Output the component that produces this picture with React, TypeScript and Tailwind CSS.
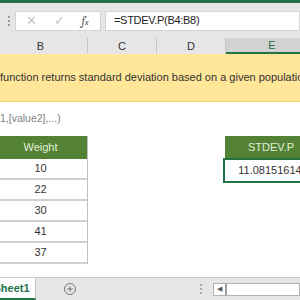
import { Plus } from "lucide-react";

const font = { fontFamily: '"Liberation Sans", Arial, sans-serif' };

const weights = [10, 22, 30, 41, 37];

function FormulaBar() {
  return (
    <div className="flex h-[35px] shrink-0 items-center bg-[#e6e6e6] pl-[2px]">
      <div className="flex w-[13px] shrink-0 flex-col items-center gap-[2px]">
        <span className="h-[2px] w-[2px] bg-[#9a9a9a]" />
        <span className="h-[2px] w-[2px] bg-[#9a9a9a]" />
        <span className="h-[2px] w-[2px] bg-[#9a9a9a]" />
      </div>
      <div className="flex h-[20px] w-[86px] shrink-0 items-center border border-[#d4d4d4] bg-white">
        <span className="w-[30px] text-center text-[13px] leading-none text-[#c3c3c3]">✕</span>
        <span className="w-[26px] text-center text-[13px] leading-none text-[#c3c3c3]">✓</span>
        <span className="w-[26px] text-center font-serif text-[12px] italic leading-none text-[#555]">
          f<span className="text-[8px]">x</span>
        </span>
      </div>
      <div className="ml-[4px] flex h-[20px] flex-1 items-center border border-[#d4d4d4] bg-white pl-[8px] text-[11px] tracking-[-0.3px] text-[#222]">
        =STDEV.P(B4:B8)
      </div>
    </div>
  );
}

function ColumnHeaders() {
  return (
    <div className="-ml-[6px] flex h-[16px] shrink-0 bg-[#e6e6e6] text-[11px] text-[#333]">
      <div className="flex w-[94px] shrink-0 items-center justify-center border-r border-[#c6c6c6]">B</div>
      <div className="flex w-[69px] shrink-0 items-center justify-center border-r border-[#c6c6c6]">C</div>
      <div className="flex w-[69px] shrink-0 items-center justify-center border-r border-[#c6c6c6]">D</div>
      <div className="flex w-[92px] shrink-0 items-center justify-center border-b-2 border-[#217346] bg-[#d2d2d2] text-[#217346]">
        E
      </div>
    </div>
  );
}

export default function App() {
  return (
    <div className="flex h-[300px] w-[300px] flex-col overflow-hidden bg-white" style={font}>
      <div className="h-[3px] shrink-0 bg-[#217346]" />
      <FormulaBar />
      <ColumnHeaders />

      <div className="flex h-[48px] shrink-0 items-center whitespace-nowrap border-b border-[#f2cf6b] bg-[#ffe699] text-[11px] text-[#333]">
        <span>function returns standard deviation based on a given population.</span>
      </div>

      <div className="flex h-[34px] shrink-0 items-center whitespace-nowrap text-[10.5px] text-[#7f7f7f]">
        <span>1,[value2],...)</span>
      </div>

      <div className="-ml-[6px] flex shrink-0 text-[11px]">
        <div className="flex w-[94px] shrink-0 flex-col border-r border-[#bfbfbf]">
          <div className="flex h-[23px] items-center justify-center bg-[#548235] text-[#e2efda]">Weight</div>
          {weights.map((w) => (
            <div
              key={w}
              className="flex h-[21px] items-center justify-center border-b-2 border-[#d0d0d0] text-[#333]"
            >
              {w}
            </div>
          ))}
        </div>
        <div className="w-[137px] shrink-0" />
        <div className="flex w-[92px] shrink-0 flex-col">
          <div className="flex h-[22px] items-center justify-center bg-[#548235] text-[#e2efda]">STDEV.P</div>
          <div className="-ml-[2px] flex h-[25px] items-center justify-center whitespace-nowrap border-2 border-[#217346] text-[#333]">
            11.08151614
          </div>
        </div>
      </div>

      <div className="flex-1" />

      <div className="flex h-[23px] shrink-0 border-t border-[#c6c6c6] bg-[#e6e6e6]">
        <div className="-ml-[12px] flex w-[48px] shrink-0 items-center justify-center border-r border-b-2 border-r-[#c6c6c6] border-b-[#217346] bg-white">
          <span className="text-[11px] font-bold text-[#217346]">Sheet1</span>
        </div>
        <div className="flex w-[68px] shrink-0 items-center justify-center">
          <Plus className="h-[12px] w-[12px] rounded-full border border-[#777] p-[1px] text-[#777]" strokeWidth={3} />
        </div>
        <div className="flex flex-1 items-center">
          <div className="ml-[96px] flex flex-col gap-[2px]">
            <span className="h-[2px] w-[2px] bg-[#aaa]" />
            <span className="h-[2px] w-[2px] bg-[#aaa]" />
            <span className="h-[2px] w-[2px] bg-[#aaa]" />
          </div>
          <div className="ml-[11px] flex h-[13px] flex-1 border border-[#b0b0b0] bg-white">
            <div className="flex w-[13px] items-center justify-center border-r-2 border-[#a0a0a0] text-[7px] text-[#555]">
              ◀
            </div>
          </div>
        </div>
      </div>
    </div>
  );
}
